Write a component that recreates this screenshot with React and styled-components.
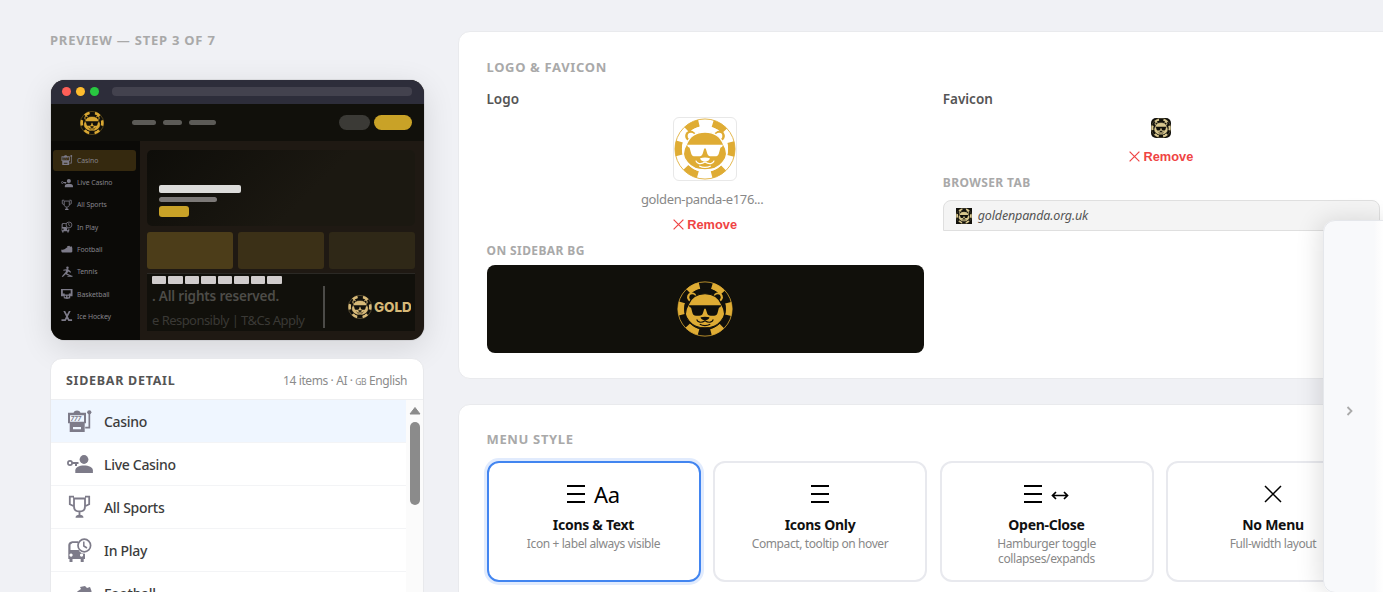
import styled, { createGlobalStyle, css } from "styled-components";

const GlobalStyle = createGlobalStyle`
  * {
    box-sizing: border-box;
  }

  body {
    margin: 0;
    overflow: hidden;
    background: #f0f1f5;
    font-family: "Noto Sans", "Open Sans", sans-serif;
    color: #111;
  }
`;

const Page = styled.div`
  position: relative;
  display: flex;
  align-items: flex-start;
  gap: 34px;
  height: 592px;
  padding: 31px 0 0 50px;
  overflow: hidden;
`;

const SectionLabel = styled.h2`
  margin: 0;
  height: 18px;
  font-size: ${(props) => props.$size || 13}px;
  line-height: 18px;
  font-weight: 700;
  letter-spacing: ${(props) => props.$spacing ?? 0.65}px;
  color: #a9a9a9;
  text-transform: uppercase;
  white-space: nowrap;
`;

/* ---------- left column ---------- */

const LeftColumn = styled.aside`
  flex: none;
  width: 374px;
`;

const BrowserFrame = styled.div`
  width: 373px;
  height: 260px;
  margin: 31px 0 0 1px;
  border-radius: 14px;
  overflow: hidden;
  background: #1f1913;
  box-shadow: 0 8px 32px rgba(0, 0, 0, 0.12), 0 0 1px rgba(0, 0, 0, 0.6);
`;

const BrowserBar = styled.div`
  display: flex;
  align-items: center;
  gap: 5px;
  height: 24px;
  padding: 0 12px 1px 10.5px;
  background: #2d2d3a;
`;

const Dot = styled.span`
  width: 9px;
  height: 9px;
  border-radius: 50%;
  background: ${(props) => props.$color};
`;

const UrlBar = styled.span`
  flex: 1;
  height: 9px;
  margin-left: 8px;
  border-radius: 4px;
  background: #43424e;
`;

const SiteHeader = styled.div`
  display: flex;
  align-items: center;
  height: 37px;
  padding: 0 12px 0 29px;
  background: #11100b;
`;

const NavPills = styled.div`
  display: flex;
  gap: 7px;
  flex: 1;
  margin-left: 28px;
`;

const Bar = styled.span`
  display: block;
  width: ${(props) => props.$width}px;
  height: ${(props) => props.$height || 5}px;
  border-radius: ${(props) => props.$radius ?? 2.5}px;
  background: ${(props) => props.$color || "#5c5b57"};
`;

const HeaderButtons = styled.div`
  display: flex;
  gap: 4px;
`;

const SiteBody = styled.div`
  display: flex;
  height: 199px;
`;

const SiteSidebar = styled.div`
  width: 89px;
  padding: 9px 4px 0 2px;
  background: #0b0a07;
`;

const SiteItem = styled.div`
  display: flex;
  align-items: center;
  gap: 4px;
  height: 20.5px;
  margin-bottom: 1.8px;
  padding-left: 8px;
  border-radius: 3px;
  font-size: 6.9px;
  letter-spacing: -0.08px;
  color: #85848b;
  background: ${(props) => (props.$active ? "#35290f" : "transparent")};
`;

const SiteMain = styled.div`
  flex: 1;
  padding: 9px 9px 0 7px;
  min-width: 0;
`;

const Hero = styled.div`
  display: flex;
  flex-direction: column;
  gap: 4px;
  height: 76px;
  padding: 35px 12px 0;
  border-radius: 5px;
  background: linear-gradient(135deg, #0e0d09 0%, #1b1811 60%);
`;

const Tiles = styled.div`
  display: grid;
  grid-template-columns: repeat(3, 1fr);
  gap: 5px;
  margin: 6px 0 4px;
`;

const Tile = styled.div`
  height: 37px;
  border-radius: 3px;
  background: ${(props) => props.$color};
`;

const SiteFooter = styled.div`
  height: 58px;
  padding: 2px 4px 0 5px;
  border-top: 1px solid #2b2925;
  background: #11100b;
  overflow: hidden;
`;

const Payments = styled.div`
  display: flex;
  gap: 2.3px;
`;

const FooterRow = styled.div`
  display: flex;
  align-items: center;
  height: 46px;
`;

const FooterText = styled.div`
  width: 172.5px;
  height: 42px;
  border-right: 2px solid #4c4b48;
  color: #3a3935;
  font-size: 13px;
  line-height: 24px;
  white-space: nowrap;
  letter-spacing: -0.54px;
`;

const Copyright = styled.div`
  height: 24px;
  margin-top: -2px;
  font-size: 13.5px;
  font-weight: 600;
  letter-spacing: -0.19px;
  color: #4d4c48;
`;

const FooterBrand = styled.div`
  display: flex;
  align-items: center;
  gap: 2px;
  width: 63px;
  margin-left: 23.5px;
  overflow: hidden;
  font-family: Inter, sans-serif;
  font-size: 13.5px;
  font-weight: 800;
  letter-spacing: -0.1px;
  color: #d7b978;

  svg {
    flex: none;
  }
`;

const DetailCard = styled.div`
  width: 374px;
  height: 260px;
  margin-top: 18px;
  border: 1px solid #e8e9ec;
  border-radius: 12px;
  background: #fff;
  overflow: hidden;
`;

const DetailHeader = styled.div`
  display: flex;
  align-items: center;
  justify-content: space-between;
  height: 41px;
  padding: 2px 16px 0 15px;
  border-bottom: 1px solid #eeeff1;
`;

const DetailTitle = styled.h3`
  margin: 0;
  font-size: 12.5px;
  font-weight: 700;
  letter-spacing: 0.72px;
  color: #555;
`;

const DetailMeta = styled.span`
  font-size: 12px;
  letter-spacing: -0.4px;
  color: #8b8b8b;

  small {
    font-size: 8.5px;
  }
`;

const DetailBody = styled.div`
  display: flex;
`;

const DetailList = styled.div`
  flex: 1;
`;

const DetailItem = styled.div`
  display: flex;
  align-items: center;
  gap: 11px;
  height: 43.1px;
  padding-left: 16px;
  border-bottom: 1px solid #f3f4f6;
  font-size: 14px;
  font-weight: 500;
  letter-spacing: -0.3px;
  color: #3c3c3c;
  background: ${(props) => (props.$active ? "#eff6ff" : "#fff")};
`;

const Scrollbar = styled.div`
  display: flex;
  flex-direction: column;
  align-items: center;
  width: 17px;
  height: 220px;
  padding-top: 5px;
  background: #fbfbfb;
`;

const ScrollThumb = styled.div`
  width: 10px;
  height: 83px;
  margin-top: 7px;
  border-radius: 5px;
  background: #8b8b8b;
`;

/* ---------- right column ---------- */

const RightColumn = styled.main`
  flex: none;
  width: 951px;
`;

const Card = styled.section`
  height: ${(props) => props.$height}px;
  margin-bottom: 25px;
  padding: ${(props) => props.$top}px 28px 0 27.5px;
  border: 1px solid #e9eaed;
  border-radius: 12px;
  background: #fff;
`;

const LogoGrid = styled.div`
  display: grid;
  grid-template-columns: 1fr 1fr;
  gap: 19px;
  margin-top: 14px;
`;

const FieldLabel = styled.div`
  height: 18px;
  font-size: 13.5px;
  line-height: 18px;
  font-weight: 600;
  color: #555;
`;

const Upload = styled.div`
  display: flex;
  flex-direction: column;
  align-items: center;
`;

const Thumb = styled.div`
  display: flex;
  align-items: center;
  justify-content: center;
  width: 64px;
  height: 64px;
  margin-top: 9px;
  border: 1px solid #e8e8e8;
  border-radius: 6px;
`;

const FileName = styled.div`
  height: 18px;
  margin-top: 9px;
  padding-right: 6px;
  font-size: 13px;
  line-height: 18px;
  letter-spacing: -0.36px;
  color: #888;
`;

const RemoveButton = styled.button`
  display: flex;
  align-items: center;
  gap: 3px;
  height: 18px;
  margin: ${(props) => props.$top}px 0 9px;
  padding: 0;
  border: none;
  background: none;
  font: bold 12.8px "Liberation Sans", Arial, sans-serif;
  color: #ef4444;
`;

const SidebarPreview = styled.div`
  display: flex;
  align-items: center;
  justify-content: center;
  height: 88px;
  margin-top: 4.5px;
  border-radius: 8px;
  background: #11100b;
`;

const FaviconBox = styled.div`
  display: flex;
  width: ${(props) => props.$size}px;
  height: ${(props) => props.$size}px;
  margin-top: ${(props) => props.$top || 0}px;
  border-radius: ${(props) => props.$radius || 0}px;
  overflow: hidden;
  background: #12110c;
`;

const BrowserTab = styled.div`
  display: flex;
  align-items: center;
  gap: 6px;
  height: 31px;
  margin-top: 8px;
  padding-left: 12px;
  border: 1px solid #dfdfdf;
  border-radius: 8px 8px 0 0;
  background: #f4f4f4;
  font-size: 12.5px;
  font-style: italic;
  letter-spacing: -0.15px;
  color: #555;
`;

const MenuGrid = styled.div`
  display: grid;
  grid-template-columns: repeat(4, 1fr);
  gap: 12.5px;
  margin-top: 13px;
`;

const MenuOption = styled.div`
  display: flex;
  flex-direction: column;
  align-items: center;
  height: 121px;
  padding-top: 15px;
  border: 2px solid #e8e9ee;
  border-radius: 12px;
  text-align: center;

  ${(props) =>
    props.$selected &&
    css`
      border-color: #4285f0;
      box-shadow: 0 0 0 3px #e1ebfd;
    `}
`;

const MenuIcon = styled.div`
  display: flex;
  align-items: center;
  gap: 9px;
  height: 32px;
  font-size: 22px;
  line-height: 32px;
  letter-spacing: -0.3px;
  color: #000;
`;

const MenuTitle = styled.div`
  height: 20px;
  margin-top: 5px;
  font-size: 14px;
  line-height: 20px;
  font-weight: 700;
  letter-spacing: -0.28px;
`;

const MenuText = styled.div`
  width: 140px;
  margin-top: 1px;
  font-size: 12px;
  line-height: 15px;
  letter-spacing: -0.4px;
  color: #888;
`;

const Drawer = styled.div`
  position: absolute;
  top: 220px;
  right: -12px;
  display: flex;
  align-items: center;
  width: 72px;
  height: 373px;
  padding: 9px 0 0 22px;
  border: 1px solid #e5e7eb;
  border-radius: 12px;
  background: linear-gradient(to right, #f8f9fb 50px, #fbfbfc 53px, #fff 60px);
  box-shadow: -4px 0 24px rgba(0, 0, 0, 0.12);
`;

/* ---------- drawings ---------- */

const PandaLogo = ({ size, color = "#dfac34", bg = "#11100b" }) => (
  <svg width={size} height={size} viewBox="0 0 64 64">
    <circle cx="32" cy="32" r="31" fill={bg} stroke={color} strokeWidth="0.9" />
    <circle
      cx="32"
      cy="32"
      r="27.4"
      fill="none"
      stroke={color}
      strokeWidth="7.2"
      strokeDasharray="14.347 14.347"
      transform="rotate(-15 32 32)"
    />
    <circle cx="32" cy="32" r="23.8" fill={bg} />
    <circle cx="17" cy="18.5" r="5.5" fill={color} />
    <circle cx="47" cy="18.5" r="5.5" fill={color} />
    <circle cx="17.5" cy="18.5" r="3.4" fill={bg} />
    <circle cx="46.5" cy="18.5" r="3.4" fill={bg} />
    <path
      fill={color}
      stroke={bg}
      strokeWidth="1.2"
      d="M13 27c3-8 9-12.500 19-12.500S48 19 51 27c4.500 7 4 14-1 19-4 5-10 7.500-18 7.500S18 51 14 46C9 41 8.500 34 13 27z"
    />
    <path
      fill={bg}
      d="M13.5 27.6h37l-.8 2.2-1.8.8-1.6 6c-.6 2.1-1.8 3-4 3h-3.8c-2.2 0-3.6-1-4.2-3l-1.5-5h-1.6l-1.5 5c-.6 2-2 3-4.2 3h-3.8c-2.2 0-3.400-.9-4-3l-1.600-6-1.800-.8z"
    />
    <path fill={bg} d="M27 41.5c3-1 7-1 10 0 0 2-3 3.500-5 3.500s-5-1.500-5-3.500z" />
    <path
      fill="none"
      stroke={bg}
      strokeWidth="1.3"
      d="M22.5 44c1 3 5 4.500 9.500 1.500 4.500 3 8.500 1.500 9.500-1.500M26 49.500c4 2 8 2 12 0"
    />
  </svg>
);

const icons = {
  casino: (
    <>
      <path d="M5 3.700h1.500C7 2.200 8.500 1.500 10 1.500s3 .7 3.500 2.200H19v10.600h-1.300V23h-15v-8.700H1V3.700zM3 6.300v6.400h14V6.300zM6 18v2.300h8V18z" fillRule="evenodd" transform="translate(0 1)" />
      <circle cx="22.3" cy="4.3" r="2.1" />
      <path d="M21.500 6h1.700v14.500h-5v-1.700h3.300z" />
      <text x="3.600" y="13" fontSize="6.8" fontStyle="italic" fontWeight="600">777</text>
    </>
  ),
  live: (
    <>
      <circle cx="3" cy="12" r="2.1" fill="none" stroke="currentColor" strokeWidth="1.7" />
      <path d="M5 11h6.500v2H10v2H8v-2H5z" />
      <circle cx="17" cy="8.500" r="4.4" />
      <path d="M8.300 22v-2.500c0-3 4-4.900 8.700-4.900s8.900 1.900 8.900 4.900V22z" />
    </>
  ),
  sports: (
    <>
      <path fill="none" stroke="currentColor" strokeWidth="1.8" d="M7 4.500h11v8c0 3-2 5-5.500 5S7 15.500 7 12.500zM7 2.700H2.800v7.500L7 12.200M18 2.700h4.200v7.500L18 12.200M12.500 17.500v4" />
      <path d="M8.500 23.700c0-2 1.500-3 4-3s4 1 4 3z" />
    </>
  ),
  play: (
    <>
      <path fillRule="evenodd" d="M1.300 8c0-2 1.500-3.300 4-3.800h6V6H5.500L3.500 7.500V13h8.200c1.200 2.500 3.400 3.700 6.300 3.700V22h-1.300v3h-3v-3H5.500v3h-3v-3H1.300zM4 16.500a1.600 1.600 0 1 0 .1 0zm10.500 0a1.600 1.600 0 1 0 .1 0z" />
      <circle cx="17.3" cy="8.5" r="6.3" fill="none" stroke="currentColor" strokeWidth="1.7" />
      <path fill="none" stroke="currentColor" strokeWidth="1.5" d="M16.800 4.500V9l3.200 2" />
    </>
  ),
  football: <path d="M1 14c4 1 7 0 10-3l3-2-1-2 5-1 2 2 3-1 1.500 4v8l-2 1.500H3c-2 0-3-3.500-2-6.500z" />,
  tennis: (
    <>
      <circle cx="14" cy="4" r="2.7" />
      <path d="M5 8l9-1.500 3 1.500 5 5-1.500 1.500L16 12l-3 4 10 5v2.500L10 18l-6 6-2.500-1.500L10 13l1-3-6 .5z" />
      <path d="M14 21h11v2.500H14z" />
    </>
  ),
  basketball: (
    <path fillRule="evenodd" d="M0 2h25v16h-5v4l-7 2-7-2v-4H0zM4 5v7h17V5zM8 12h9v2H8zm0 5v3h3v-3zm6 0v3h3v-3z" />
  ),
  hockey: <path d="M5 2h4l4 8 4-8h4l-6 12 3 6h6v4h-8l-3-5-3 5H1v-4h7l3-6z" />,
};

const SportIcon = ({ name, size }) => (
  <svg width={size} height={size} viewBox="0 0 26 26" fill="currentColor" color="#7d7b89">
    {icons[name]}
  </svg>
);

const Cross = ({ size, stroke }) => (
  <svg width={size} height={size} viewBox="0 0 18 18" fill="none" stroke="currentColor" strokeWidth={stroke}>
    <path d="M1 1l16 16M17 1L1 17" />
  </svg>
);

const Hamburger = () => (
  <svg width="18" height="18" viewBox="0 0 18 18" stroke="#000" strokeWidth="2">
    <path d="M0 1h18M0 9h18M0 17h18" />
  </svg>
);

const DoubleArrow = () => (
  <svg width="18" height="12" viewBox="0 0 18 12" fill="none" stroke="#000" strokeWidth="1.7">
    <path d="M1.500 7.500h15M5 4L1.500 7.500 5 11M13 4l3.500 3.500L13 11" />
  </svg>
);

const sidebarItems = [
  { icon: "casino", label: "Casino" },
  { icon: "live", label: "Live Casino" },
  { icon: "sports", label: "All Sports" },
  { icon: "play", label: "In Play" },
  { icon: "football", label: "Football" },
  { icon: "tennis", label: "Tennis" },
  { icon: "basketball", label: "Basketball" },
  { icon: "hockey", label: "Ice Hockey" },
];

const menuOptions = [
  { title: "Icons & Text", text: "Icon + label always visible", icon: <><Hamburger />Aa</> },
  { title: "Icons Only", text: "Compact, tooltip on hover", icon: <Hamburger /> },
  { title: "Open-Close", text: "Hamburger toggle collapses/expands", icon: <><Hamburger /><DoubleArrow /></> },
  { title: "No Menu", text: "Full-width layout", icon: <Cross size={18} stroke={1.5} /> },
];

function SitePreview() {
  return (
    <BrowserFrame>
      <BrowserBar>
        <Dot $color="#ff5f57" />
        <Dot $color="#febc2e" />
        <Dot $color="#28c840" />
        <UrlBar />
      </BrowserBar>
      <SiteHeader>
        <PandaLogo size={24} color="#d9a733" />
        <NavPills>
          <Bar $width={24} />
          <Bar $width={19} />
          <Bar $width={27} />
        </NavPills>
        <HeaderButtons>
          <Bar $width={31} $height={15.5} $radius={8} $color="#3b3a36" />
          <Bar $width={38} $height={15.5} $radius={8} $color="#c9a227" />
        </HeaderButtons>
      </SiteHeader>
      <SiteBody>
        <SiteSidebar>
          {sidebarItems.map((item, index) => (
            <SiteItem key={item.label} $active={index === 0}>
              <SportIcon name={item.icon} size={12} />
              {item.label}
            </SiteItem>
          ))}
        </SiteSidebar>
        <SiteMain>
          <Hero>
            <Bar $width={82} $height={8} $radius={2} $color="#dcdcda" />
            <Bar $width={58} $height={5} $color="#7c7977" />
            <Bar $width={30} $height={11} $radius={3} $color="#c9a227" />
          </Hero>
          <Tiles>
            <Tile $color="#4c3d19" />
            <Tile $color="#3b3017" />
            <Tile $color="#2f2817" />
          </Tiles>
          <SiteFooter>
            <Payments>
              {Array.from({ length: 8 }, (_, i) => (
                <Bar key={i} $width={14.2} $height={8} $radius={1} $color="#d0cccc" />
              ))}
            </Payments>
            <FooterRow>
              <FooterText>
                <Copyright>. All rights reserved.</Copyright>
                e Responsibly | T&amp;Cs Apply
              </FooterText>
              <FooterBrand>
                <PandaLogo size={24} color="#d7b978" />
                GOLD
              </FooterBrand>
            </FooterRow>
          </SiteFooter>
        </SiteMain>
      </SiteBody>
    </BrowserFrame>
  );
}

function App() {
  return (
    <>
      <GlobalStyle />
      <Page>
        <LeftColumn>
          <SectionLabel $spacing={0.77}>Preview — Step 3 of 7</SectionLabel>
          <SitePreview />
          <DetailCard>
            <DetailHeader>
              <DetailTitle>SIDEBAR DETAIL</DetailTitle>
              <DetailMeta>
                14 items · AI · <small>GB</small> English
              </DetailMeta>
            </DetailHeader>
            <DetailBody>
              <DetailList>
                {sidebarItems.slice(0, 5).map((item, index) => (
                  <DetailItem key={item.label} $active={index === 0}>
                    <SportIcon name={item.icon} size={26} />
                    {item.label}
                  </DetailItem>
                ))}
              </DetailList>
              <Scrollbar>
                <svg width="12" height="10" viewBox="0 0 12 10">
                  <path d="M6 2.500L11 9H1z" fill="#8b8b8b" stroke="#8b8b8b" strokeLinejoin="round" />
                </svg>
                <ScrollThumb />
              </Scrollbar>
            </DetailBody>
          </DetailCard>
        </LeftColumn>

        <RightColumn>
          <Card $height={348} $top={26}>
            <SectionLabel>Logo &amp; Favicon</SectionLabel>
            <LogoGrid>
              <div>
                <FieldLabel>Logo</FieldLabel>
                <Upload>
                  <Thumb>
                    <PandaLogo size={62} bg="#fff" />
                  </Thumb>
                  <FileName>golden-panda-e176...</FileName>
                  <RemoveButton $top={7}>
                    <Cross size={11} stroke={2} />
                    Remove
                  </RemoveButton>
                </Upload>
                <SectionLabel $size={12} $spacing={0.4}>On sidebar bg</SectionLabel>
                <SidebarPreview>
                  <PandaLogo size={56} />
                </SidebarPreview>
              </div>
              <div>
                <FieldLabel>Favicon</FieldLabel>
                <Upload>
                  <FaviconBox $size={20} $radius={5} $top={10}>
                    <PandaLogo size={20} color="#d8c78e" />
                  </FaviconBox>
                  <RemoveButton $top={9}>
                    <Cross size={11} stroke={2} />
                    Remove
                  </RemoveButton>
                </Upload>
                <SectionLabel $size={12} $spacing={0.4}>Browser tab</SectionLabel>
                <BrowserTab>
                  <FaviconBox $size={16}>
                    <PandaLogo size={16} color="#d8c78e" />
                  </FaviconBox>
                  goldenpanda.org.uk
                </BrowserTab>
              </div>
            </LogoGrid>
          </Card>

          <Card $height={220} $top={25}>
            <SectionLabel>Menu style</SectionLabel>
            <MenuGrid>
              {menuOptions.map((option, index) => (
                <MenuOption key={option.title} $selected={index === 0}>
                  <MenuIcon>{option.icon}</MenuIcon>
                  <MenuTitle>{option.title}</MenuTitle>
                  <MenuText>{option.text}</MenuText>
                </MenuOption>
              ))}
            </MenuGrid>
          </Card>
        </RightColumn>

        <Drawer>
          <svg width="8" height="10" viewBox="0 0 8 10" fill="none" stroke="#aaa" strokeWidth="1.8">
            <path d="M1.500 1l4 4-4 4" />
          </svg>
        </Drawer>
      </Page>
    </>
  );
}

export default App;
